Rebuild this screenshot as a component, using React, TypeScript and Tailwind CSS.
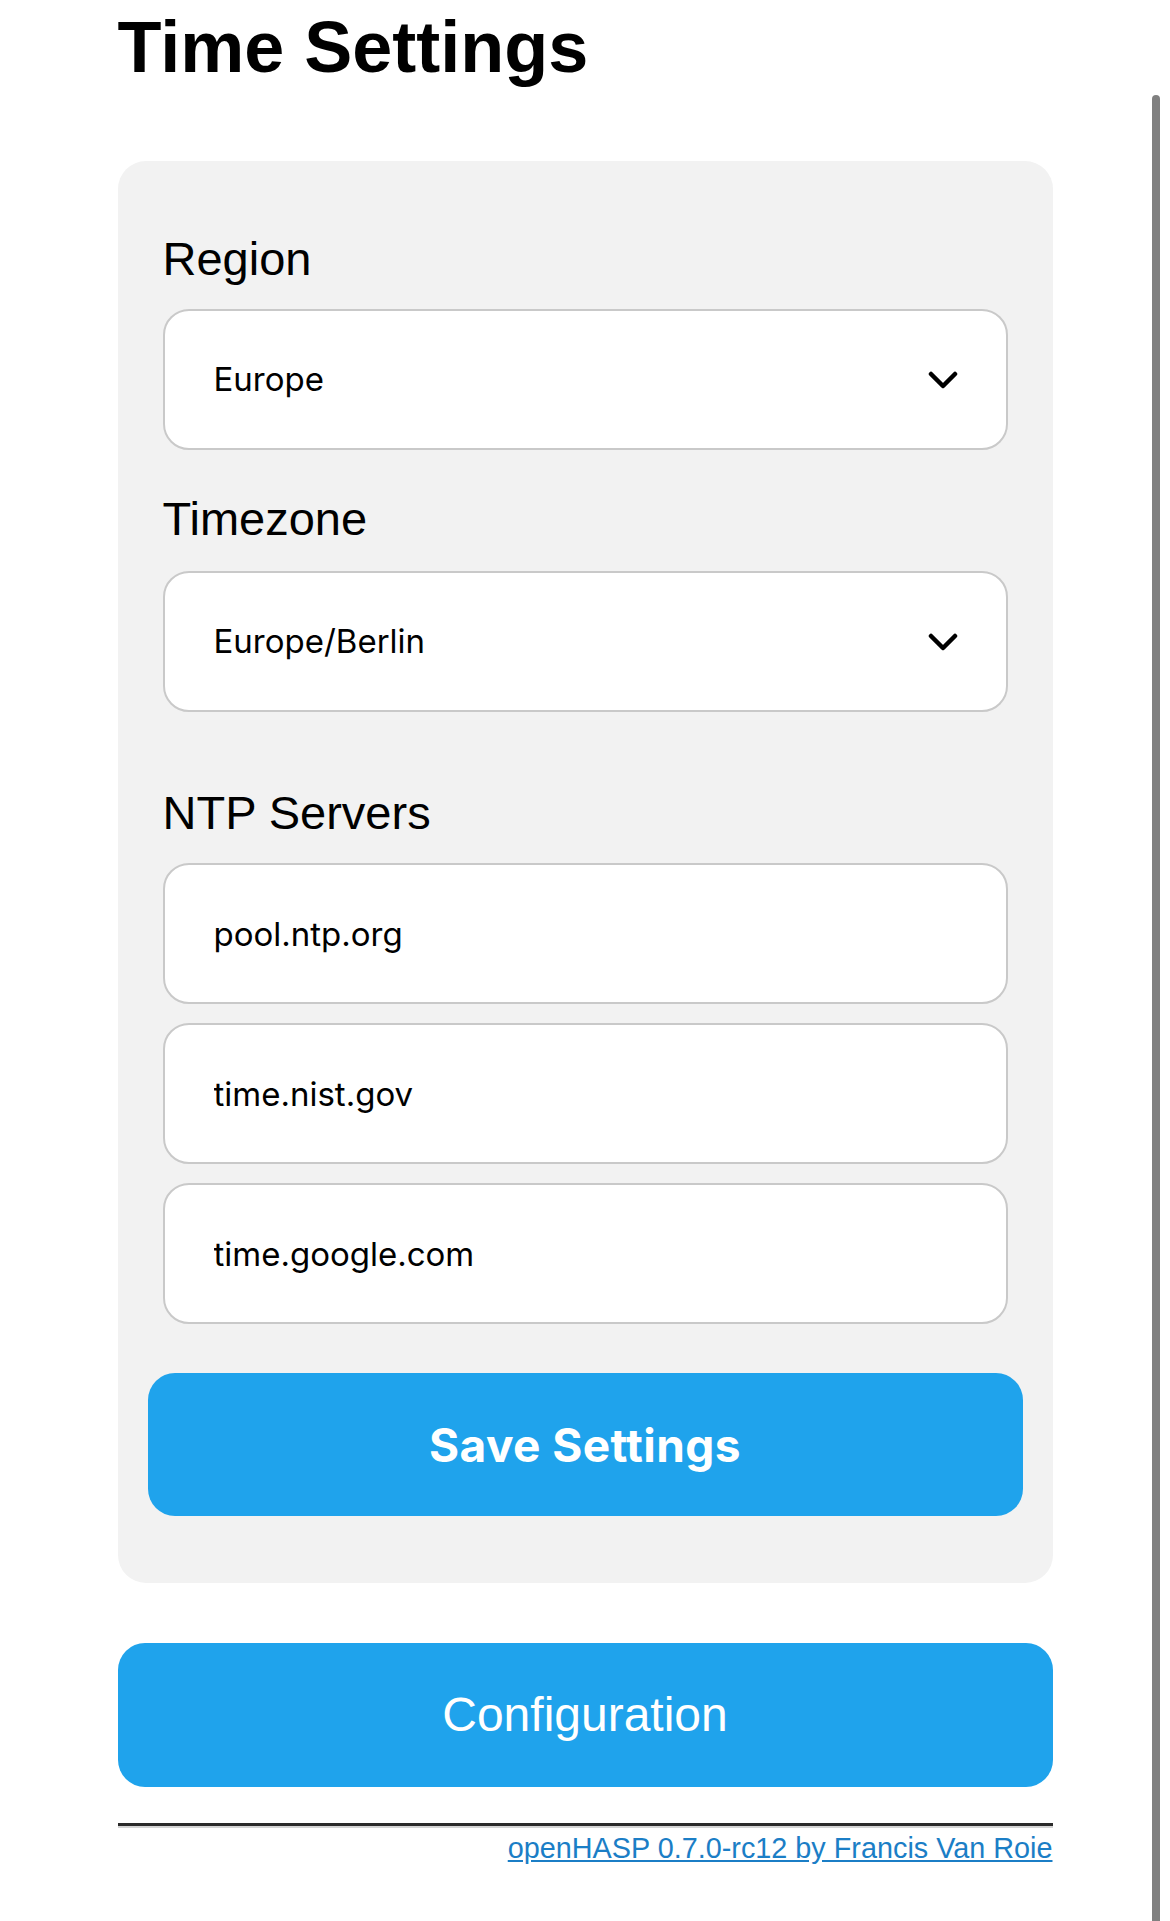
import { useState } from "react";

const Chevron = () => (
  <svg width="30" height="18" viewBox="0 0 30 18" fill="none">
    <path d="M3 3 L15 15 L27 3" stroke="#000" strokeWidth="4.5" strokeLinecap="round" strokeLinejoin="round" />
  </svg>
);

const SelectField = ({ value }: { value: string }) => (
  <div className="flex h-[141px] w-full items-center justify-between rounded-[26px] border-2 border-[#c9c9c9] bg-white pl-[49px] pr-[48px]">
    <span className="font-['Inter',sans-serif] text-[33px] leading-none text-black">{value}</span>
    <Chevron />
  </div>
);

const TextField = ({ value }: { value: string }) => {
  const [v, setV] = useState(value);
  return (
    <input
      value={v}
      onChange={(e) => setV(e.target.value)}
      className="block h-[141px] w-full rounded-[26px] border-2 border-[#c9c9c9] bg-white pl-[49px] font-['Inter',sans-serif] text-[33px] leading-none text-black outline-none"
    />
  );
};

export default function App() {
  const servers = ["pool.ntp.org", "time.nist.gov", "time.google.com"];

  return (
    <div className="relative min-h-[1921px] bg-white font-['Liberation_Sans',Arial,sans-serif] text-black">
      <div className="mx-auto w-[935px] pt-[11px]">
        <h1 className="text-[72px] font-bold leading-none">Time Settings</h1>

        <div className="mt-[78px] rounded-[28px] bg-[#f2f2f2] px-[45px] pb-[67px] pt-[74px]">
          <label className="block text-[47px] leading-none">Region</label>
          <div className="mt-[27px]">
            <SelectField value="Europe" />
          </div>

          <label className="mt-[45px] block text-[47px] leading-none">Timezone</label>
          <div className="mt-[29px]">
            <SelectField value="Europe/Berlin" />
          </div>

          <label className="mt-[77px] block text-[47px] leading-none">NTP Servers</label>
          <div className="mt-[27px] flex flex-col gap-[19px]">
            {servers.map((s) => (
              <TextField key={s} value={s} />
            ))}
          </div>

          <button className="-mx-[15px] mt-[49px] flex h-[143px] w-[calc(100%+30px)] items-center justify-center rounded-[27px] bg-[#1fa3ec] font-['Inter',sans-serif] text-[46px] font-bold leading-none tracking-[0.4px] text-white">
            Save Settings
          </button>
        </div>

        <button className="mt-[60px] flex h-[144px] w-full items-center justify-center rounded-[27px] bg-[#1fa3ec] text-[48px] leading-none text-white">
          Configuration
        </button>

        <hr className="mt-[36px] border-0 border-b-[2px] border-t-[3px] border-b-[#d4d4d4] border-t-[#2a2a2a]" />

        <div className="mt-[6px] text-right">
          <a href="#" className="text-[28.8px] leading-none text-[#1b7ec6] underline">
            openHASP 0.7.0-rc12 by Francis Van Roie
          </a>
        </div>
      </div>

      <div className="absolute bottom-0 left-[1152px] top-[95px] w-[8px] rounded-t-full bg-[#808080]" />
    </div>
  );
}
